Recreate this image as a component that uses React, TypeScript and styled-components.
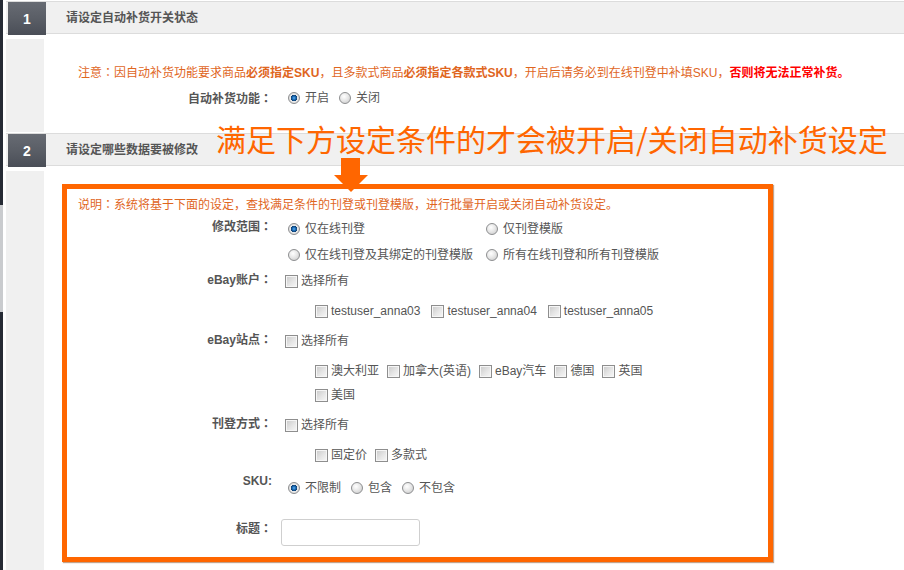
import React from 'react';
import styled, { createGlobalStyle } from 'styled-components';

const Global = createGlobalStyle`
  html, body { margin: 0; padding: 0; background: #fff; overflow: hidden; }
  body {
    font-family: "Liberation Sans", "Noto Sans CJK SC", sans-serif;
    font-size: 12px;
    color: #555;
  }
`;

const Page = styled.div`
  position: relative;
  display: flex;
  width: 904px;
  height: 570px;
`;

const Strip = styled.div`
  flex: none;
  width: 3px;
  margin-right: 3px;
  background: linear-gradient(
    to bottom,
    #262b35 0,
    #262b35 205px,
    #c9cbce 205px,
    #c9cbce 312px,
    #262b35 312px
  );
`;

const Main = styled.div`
  flex: 1;
  display: flex;
  flex-direction: column;
`;

const SectionHeader = styled.div`
  display: flex;
  align-items: flex-start;
  height: 31px;
  margin-top: 1px;
  border-top: 1px solid #dcdcdc;
  border-bottom: 1px solid #dcdcdc;
  background: #f0f0f0;
`;

const StepNo = styled.div`
  flex: none;
  width: 38px;
  height: 33px;
  margin-left: 2px;
  display: flex;
  align-items: center;
  justify-content: center;
  background: linear-gradient(to bottom, #676b73 0%, #5a5e66 50%, #4a4e57 100%);
  color: #fff;
  font-weight: bold;
  font-size: 14px;
`;

const StepTitle = styled.div`
  margin-left: 20px;
  line-height: 33px;
  font-weight: bold;
  color: #555;
`;

const Content = styled.div<{ $height?: number }>`
  display: flex;
  margin-top: 5px;
  ${(p) => (p.$height ? `height: ${p.$height}px;` : 'flex: 1;')}
`;

const GrayCol = styled.div`
  flex: none;
  width: 38px;
  background: #f0f0f0;
`;

const Body = styled.div<{ $pt: number; $pl: number }>`
  flex: 1;
  padding-top: ${(p) => p.$pt}px;
  padding-left: ${(p) => p.$pl}px;
`;

const Note = styled.div<{ $pl: number }>`
  padding-left: ${(p) => p.$pl}px;
  line-height: 20px;
  color: #df661e;
  white-space: nowrap;
`;

const Colon = styled.span`
  font-family: "Noto Sans CJK TC", sans-serif;
`;

const Strong = styled.b`
  font-weight: bold;
`;

const Warn = styled.b`
  font-weight: bold;
  color: #ff0000;
`;

const Highlight = styled.div`
  box-sizing: border-box;
  width: 711px;
  margin-top: 13px;
  padding: 5px 0 11px 0;
  border: 5px solid #ff6600;
  box-shadow: 1px 1px 1px rgba(120, 50, 0, 0.45);
`;

const FormRow = styled.div<{ $mt: number }>`
  display: flex;
  align-items: flex-start;
  margin-top: ${(p) => p.$mt}px;
`;

const Label = styled.div<{ $w: number }>`
  flex: none;
  width: ${(p) => p.$w}px;
  text-align: right;
  font-weight: bold;
  color: #555;
  line-height: 20px;
  white-space: nowrap;
`;

const Field = styled.div<{ $pt: number; $pl?: number }>`
  padding-top: ${(p) => p.$pt}px;
  padding-left: ${(p) => p.$pl ?? 13}px;
`;

const RadioGrid = styled.div`
  display: grid;
  grid-template-columns: 198px auto;
  row-gap: 6px;
`;

const Line = styled.div`
  display: flex;
  align-items: center;
  height: 20px;
`;

const SubList = styled.div`
  display: flex;
  flex-wrap: wrap;
  row-gap: 4px;
  max-width: 362px;
  margin-top: 10px;
  padding-left: 30px;
`;

const Option = styled.label`
  display: inline-flex;
  align-items: center;
  height: 20px;
  line-height: 20px;
  color: #555;
  white-space: nowrap;
  margin-right: 7px;
`;

const CheckOption = styled(Option)<{ $mr?: number }>`
  margin-right: ${(p) => p.$mr ?? 8}px;
`;

const Radio = styled.input.attrs({ type: 'radio' })`
  appearance: none;
  -webkit-appearance: none;
  flex: none;
  box-sizing: border-box;
  width: 12px;
  height: 12px;
  margin: 0 5px 0 3px;
  border-radius: 50%;
  border: 1px solid #8d8e90;
  background: radial-gradient(circle at 40% 35%, #ffffff 0, #e8e8e8 45%, #c6c6c6 100%);
  &:checked {
    background: radial-gradient(
      circle at 50% 50%,
      #64b0ee 0,
      #1d6fba 1.6px,
      #0c3d70 3px,
      #eaeaea 3.4px,
      #cdcdcd 100%
    );
  }
`;

const Check = styled.input.attrs({ type: 'checkbox' })`
  appearance: none;
  -webkit-appearance: none;
  flex: none;
  box-sizing: border-box;
  width: 13px;
  height: 13px;
  margin: 0 3px 0 0;
  border: 1px solid #8e8e8e;
  background: linear-gradient(135deg, #c9c9c9 0%, #e6e6e6 55%, #f8f8f8 100%);
  box-shadow: inset 0 0 0 1px #f6f6f6;
`;

const TextBox = styled.input`
  box-sizing: border-box;
  width: 139px;
  height: 27px;
  margin: 1px 0 0 0;
  border: 1px solid #cfcfcf;
  border-radius: 3px;
  background: #fff;
  outline: none;
`;

const Callout = styled.div`
  position: absolute;
  left: 216px;
  top: 120px;
  font-family: "Noto Sans CJK SC", sans-serif;
  font-size: 30px;
  line-height: 36px;
  color: #ff6600;
  white-space: nowrap;
`;

const Arrow = styled.svg`
  position: absolute;
  left: 333px;
  top: 158px;
`;

const accounts = ['testuser_anna03', 'testuser_anna04', 'testuser_anna05'];
const sites = ['澳大利亚', '加拿大(英语)', 'eBay汽车', '德国', '英国', '美国'];
const listingTypes = ['固定价', '多款式'];

function SelectAllGroup({ label, mt, items, itemGap }: { label: string; mt: number; items: string[]; itemGap?: number }) {
  return (
    <FormRow $mt={mt}>
      <Label $w={205}>
        {label}
        <Colon>：</Colon>
      </Label>
      <Field $pt={2}>
        <Line>
          <CheckOption>
            <Check />
            选择所有
          </CheckOption>
        </Line>
        <SubList>
          {items.map((a) => (
            <CheckOption key={a} $mr={itemGap}>
              <Check />
              {a}
            </CheckOption>
          ))}
        </SubList>
      </Field>
    </FormRow>
  );
}

export default function App() {
  return (
    <>
      <Global />
      <Page>
        <Strip />
        <Main>
          <SectionHeader>
            <StepNo>1</StepNo>
            <StepTitle>请设定自动补货开关状态</StepTitle>
          </SectionHeader>
          <Content $height={93}>
            <GrayCol />
            <Body $pt={23} $pl={0}>
              <Note $pl={34}>
                注意<Colon>：</Colon>因自动补货功能要求商品<Strong>必须指定SKU</Strong>，且多款式商品
                <Strong>必须指定各款式SKU</Strong>，开启后请务必到在线刊登中补填SKU，
                <Warn>否则将无法正常补货。</Warn>
              </Note>
              <FormRow $mt={5}>
                <Label $w={228}>
                  自动补货功能<Colon>：</Colon>
                </Label>
                <Field $pt={0}>
                  <Line>
                    <Option>
                      <Radio name="auto" defaultChecked />
                      开启
                    </Option>
                    <Option>
                      <Radio name="auto" />
                      关闭
                    </Option>
                  </Line>
                </Field>
              </FormRow>
            </Body>
          </Content>

          <SectionHeader>
            <StepNo>2</StepNo>
            <StepTitle>请设定哪些数据要被修改</StepTitle>
          </SectionHeader>
          <Content>
            <GrayCol />
            <Body $pt={0} $pl={18}>
              <Highlight>
                <Note $pl={11}>
                  说明<Colon>：</Colon>系统将基于下面的设定，查找满足条件的刊登或刊登模版，进行批量开启或关闭自动补货设定。
                </Note>

                <FormRow $mt={1}>
                  <Label $w={205}>
                    修改范围<Colon>：</Colon>
                  </Label>
                  <Field $pt={3}>
                    <RadioGrid>
                      <Option>
                        <Radio name="scope" defaultChecked />
                        仅在线刊登
                      </Option>
                      <Option>
                        <Radio name="scope" />
                        仅刊登模版
                      </Option>
                      <Option>
                        <Radio name="scope" />
                        仅在线刊登及其绑定的刊登模版
                      </Option>
                      <Option>
                        <Radio name="scope" />
                        所有在线刊登和所有刊登模版
                      </Option>
                    </RadioGrid>
                  </Field>
                </FormRow>

                <SelectAllGroup label="eBay账户" mt={4} items={accounts} itemGap={11} />
                <SelectAllGroup label="eBay站点" mt={8} items={sites} />
                <SelectAllGroup label="刊登方式" mt={8} items={listingTypes} />

                <FormRow $mt={6}>
                  <Label $w={205}>SKU:</Label>
                  <Field $pt={7}>
                    <Line>
                      <Option>
                        <Radio name="sku" defaultChecked />
                        不限制
                      </Option>
                      <Option>
                        <Radio name="sku" />
                        包含
                      </Option>
                      <Option>
                        <Radio name="sku" />
                        不包含
                      </Option>
                    </Line>
                  </Field>
                </FormRow>

                <FormRow $mt={20}>
                  <Label $w={205}>
                    标题<Colon>：</Colon>
                  </Label>
                  <Field $pt={0} $pl={9}>
                    <TextBox type="text" />
                  </Field>
                </FormRow>
              </Highlight>
            </Body>
          </Content>
        </Main>

        <Callout>满足下方设定条件的才会被开启/关闭自动补货设定</Callout>
        <Arrow width="36" height="35" viewBox="0 0 36 35">
          <polygon points="8,0 27,0 27,17 35,17 18,34 1,17 8,17" fill="#ff6600" />
        </Arrow>
      </Page>
    </>
  );
}
